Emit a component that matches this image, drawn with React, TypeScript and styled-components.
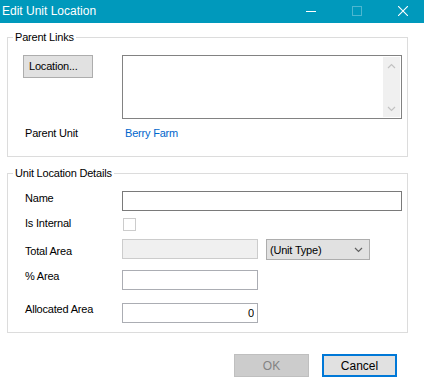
import styled, { createGlobalStyle } from 'styled-components'

const GlobalStyle = createGlobalStyle`
  html, body {
    margin: 0;
    padding: 0;
    background: #ffffff;
  }
  body {
    font-family: "Liberation Sans", Arial, sans-serif;
    color: #000000;
  }
`;

const CloseIcon = () => (
  <svg width="10" height="10" viewBox="0 0 10 10">
    <path d="M0 0 L10 10 M10 0 L0 10" stroke="#ffffff" strokeWidth="1.1" fill="none" />
  </svg>
);

const MinimizeIcon = () => (
  <svg width="10" height="10" viewBox="0 0 10 10">
    <path d="M0 5.5 H10" stroke="#ffffff" strokeWidth="1" fill="none" />
  </svg>
);

const MaximizeIcon = () => (
  <svg width="10" height="10" viewBox="0 0 10 10">
    <rect x="0.5" y="0.5" width="9" height="9" stroke="rgba(255,255,255,0.3)" strokeWidth="1" fill="none" />
  </svg>
);

const Chevron = ({ up, color }: { up?: boolean; color: string }) => (
  <svg width="9" height="6" viewBox="0 0 9 6">
    <path
      d={up ? 'M1 5 L4.5 1.5 L8 5' : 'M1 1 L4.5 4.5 L8 1'}
      stroke={color}
      strokeWidth="1.2"
      fill="none"
    />
  </svg>
);

const App = () => {
  return (
    <>
      <GlobalStyle />
      <Window>
        <TitleBar>
          <Title>Edit Unit Location</Title>
          <CaptionGroup>
            <CaptionButton><MinimizeIcon /></CaptionButton>
            <CaptionButton><MaximizeIcon /></CaptionButton>
            <CaptionButton><CloseIcon /></CaptionButton>
          </CaptionGroup>
        </TitleBar>

        <Body>
          <Group>
            <Legend>Parent Links</Legend>
            <ParentGrid>
              <LocationButton type="button">Location...</LocationButton>
              <ListBox>
                <ScrollTrack>
                  <ScrollArrow><Chevron up color="#c2c2c2" /></ScrollArrow>
                  <ScrollArrow><Chevron color="#c2c2c2" /></ScrollArrow>
                </ScrollTrack>
              </ListBox>
              <ParentLabel>Parent Unit</ParentLabel>
              <LinkValue>Berry Farm</LinkValue>
            </ParentGrid>
          </Group>

          <Group>
            <Legend>Unit Location Details</Legend>
            <DetailsForm>
              <FieldRow $top={0}>
                <FieldLabel $offset={1}>Name</FieldLabel>
                <TextBox $width={280} $dark defaultValue="" />
              </FieldRow>
              <FieldRow $top={6}>
                <FieldLabel $offset={0}>Is Internal</FieldLabel>
                <CheckBox />
              </FieldRow>
              <FieldRow $top={8}>
                <FieldLabel $offset={6}>Total Area</FieldLabel>
                <Controls>
                  <TextBox $width={136} $disabled disabled defaultValue="" />
                  <ComboBox>
                    <span>(Unit Type)</span>
                    <Chevron color="#606060" />
                  </ComboBox>
                </Controls>
              </FieldRow>
              <FieldRow $top={10}>
                <FieldLabel $offset={0}>% Area</FieldLabel>
                <TextBox $width={136} defaultValue="" />
              </FieldRow>
              <FieldRow $top={13}>
                <FieldLabel $offset={0}>Allocated Area</FieldLabel>
                <TextBox $width={136} $align="right" defaultValue="0" />
              </FieldRow>
            </DetailsForm>
          </Group>
        </Body>

        <Footer>
          <DialogButton type="button" disabled>OK</DialogButton>
          <DialogButton type="button" $primary>Cancel</DialogButton>
        </Footer>
      </Window>
    </>
  )
}

const Window = styled.div`
  width: 424px;
  height: 382px;
  overflow: hidden;
  display: flex;
  flex-direction: column;
  background: #ffffff;
  font-size: 11px;
  letter-spacing: -0.2px;
`;

const TitleBar = styled.div`
  height: 23px;
  box-sizing: border-box;
  padding-bottom: 2px;
  background: #0099bc;
  display: flex;
  align-items: center;
  color: #ffffff;
`;

const Title = styled.div`
  flex: 1;
  padding-left: 2px;
  font-size: 12px;
  line-height: 14px;
  letter-spacing: 0;
`;

const CaptionGroup = styled.div`
  display: flex;
  align-self: stretch;
  margin-right: -2px;
`;

const CaptionButton = styled.div`
  width: 46px;
  display: flex;
  align-items: center;
  justify-content: center;
`;

const Body = styled.div`
  display: flex;
  flex-direction: column;
  padding: 8px 16px 0 7px;
`;

const Group = styled.fieldset`
  margin: 0;
  padding: 0;
  min-width: 0;
  border: 1px solid #dcdcdc;

  & + & {
    margin-top: 10px;
  }
`;

const Legend = styled.legend`
  margin-left: 5px;
  padding: 0 2px;
  line-height: 13px;
`;

const ParentGrid = styled.div`
  display: grid;
  grid-template-columns: 99px 280px;
  row-gap: 8px;
  padding: 11px 0 16px 15px;
  line-height: 13px;
`;

const LocationButton = styled.button`
  width: 70px;
  height: 23px;
  box-sizing: border-box;
  align-self: start;
  border: 1px solid #adadad;
  background: #e1e1e1;
  color: #000000;
  font: inherit;
  letter-spacing: inherit;
  text-align: left;
  padding: 0 0 0 5px;
`;

const ListBox = styled.div`
  height: 64px;
  box-sizing: border-box;
  border: 1px solid #828282;
  padding: 1px;
  background: #ffffff;
  display: flex;
  justify-content: flex-end;
`;

const ScrollTrack = styled.div`
  width: 17px;
  background: #f0f0f0;
  display: flex;
  flex-direction: column;
  justify-content: space-between;
`;

const ScrollArrow = styled.div`
  height: 17px;
  display: flex;
  align-items: center;
  justify-content: center;
`;

const ParentLabel = styled.div`
  padding-left: 2px;
`;

const LinkValue = styled.div`
  padding-left: 3px;
  color: #0066cc;
`;

const DetailsForm = styled.div`
  display: flex;
  flex-direction: column;
  padding: 11px 5px 9px 17px;
`;

const FieldRow = styled.div<{ $top: number }>`
  display: grid;
  grid-template-columns: 97px auto;
  align-items: start;
  margin-top: ${(p) => p.$top}px;
`;

const FieldLabel = styled.div<{ $offset: number }>`
  line-height: 13px;
  margin-top: ${(p) => p.$offset}px;
`;

const Controls = styled.div`
  display: flex;
  gap: 8px;
`;

const TextBox = styled.input<{ $width: number; $dark?: boolean; $disabled?: boolean; $align?: string }>`
  width: ${(p) => p.$width}px;
  height: 20px;
  box-sizing: border-box;
  margin: 0;
  padding: 0 3px;
  border: 1px solid ${(p) => (p.$disabled ? '#cccccc' : p.$dark ? '#7a7a7a' : '#abadb3')};
  border-radius: 0;
  background: ${(p) => (p.$disabled ? '#f0f0f0' : '#ffffff')};
  color: #000000;
  font: inherit;
  letter-spacing: inherit;
  text-align: ${(p) => p.$align || 'left'};
  outline: none;
`;

const ComboBox = styled.div`
  width: 104px;
  height: 21px;
  box-sizing: border-box;
  border: 1px solid #adadad;
  background: #e1e1e1;
  display: flex;
  align-items: center;
  justify-content: space-between;
  padding: 0 6px 0 3px;
`;

const CheckBox = styled.div`
  width: 13px;
  height: 13px;
  box-sizing: border-box;
  margin: 1px 0 0 1px;
  border: 1px solid #cccccc;
  background: #ffffff;
`;

const Footer = styled.div`
  display: flex;
  justify-content: flex-end;
  gap: 13px;
  padding: 21px 27px 0 0;
`;

const DialogButton = styled.button<{ $primary?: boolean }>`
  width: 75px;
  height: 23px;
  box-sizing: border-box;
  margin: 0;
  padding: 0;
  font: inherit;
  font-size: 12px;
  letter-spacing: 0;
  border: ${(p) => (p.$primary ? '2px solid #0078d7' : '1px solid #bfbfbf')};
  background: ${(p) => (p.$primary ? '#e1e1e1' : '#cccccc')};
  color: ${(p) => (p.$primary ? '#000000' : '#838383')};
`;

export default App
